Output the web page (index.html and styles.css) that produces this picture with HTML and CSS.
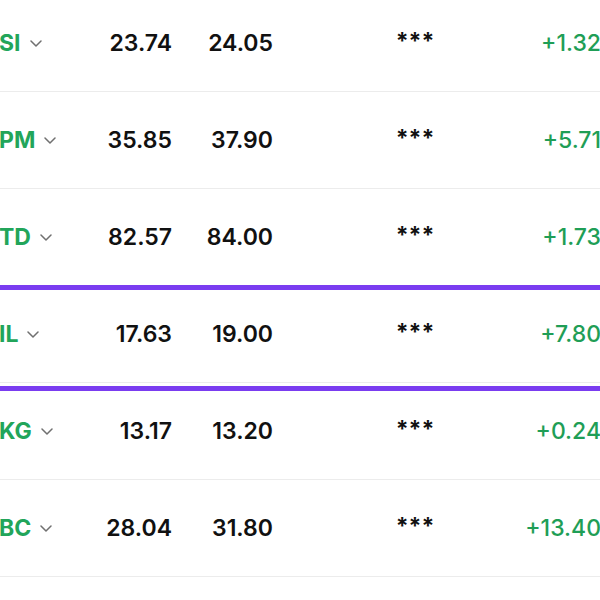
FILE: index.html
```html
<!DOCTYPE html>
<html>
<head>
<meta charset="utf-8">
<link rel="stylesheet" href="styles.css">
</head>
<body>
<div class="list">
  <div class="row">
    <div class="ticker"><span class="sym">SI</span><svg class="chev" viewBox="0 0 12 7"><polyline points="1,1 6,6 11,1"/></svg></div>
    <div class="num bid">23.74</div>
    <div class="num ask">24.05</div>
    <div class="stars">***</div>
    <div class="chg">+1.32</div>
  </div>
  <div class="row">
    <div class="ticker"><span class="sym">PM</span><svg class="chev" viewBox="0 0 12 7"><polyline points="1,1 6,6 11,1"/></svg></div>
    <div class="num bid">35.85</div>
    <div class="num ask">37.90</div>
    <div class="stars">***</div>
    <div class="chg">+5.71</div>
  </div>
  <div class="row">
    <div class="ticker"><span class="sym">TD</span><svg class="chev" viewBox="0 0 12 7"><polyline points="1,1 6,6 11,1"/></svg></div>
    <div class="num bid">82.57</div>
    <div class="num ask">84.00</div>
    <div class="stars">***</div>
    <div class="chg">+1.73</div>
  </div>
  <div class="row selected">
    <div class="highlight"></div>
    <div class="ticker"><span class="sym">IL</span><svg class="chev" viewBox="0 0 12 7"><polyline points="1,1 6,6 11,1"/></svg></div>
    <div class="num bid">17.63</div>
    <div class="num ask">19.00</div>
    <div class="stars">***</div>
    <div class="chg">+7.80</div>
  </div>
  <div class="row">
    <div class="ticker"><span class="sym">KG</span><svg class="chev" viewBox="0 0 12 7"><polyline points="1,1 6,6 11,1"/></svg></div>
    <div class="num bid">13.17</div>
    <div class="num ask">13.20</div>
    <div class="stars">***</div>
    <div class="chg">+0.24</div>
  </div>
  <div class="row">
    <div class="ticker"><span class="sym">BC</span><svg class="chev" viewBox="0 0 12 7"><polyline points="1,1 6,6 11,1"/></svg></div>
    <div class="num bid">28.04</div>
    <div class="num ask">31.80</div>
    <div class="stars">***</div>
    <div class="chg">+13.40</div>
  </div>
</div>
</body>
</html>
```

FILE: styles.css
```css
html, body {
  margin: 0;
  padding: 0;
  background: #ffffff;
  overflow: hidden;
}
body {
  font-family: Inter, "Noto Sans", "Liberation Sans", sans-serif;
  color: #111111;
  width: 600px;
  height: 600px;
}
.list {
  margin-top: -5px;
}
.row {
  position: relative;
  display: grid;
  grid-template-columns: 100px 72px 101px 92px 100px 135px;
  align-items: center;
  height: 96px;
  border-bottom: 1px solid #ececec;
}
.ticker {
  display: flex;
  align-items: center;
  gap: 9px;
  margin-left: -1px;
}
.sym {
  font-weight: 700;
  font-size: 23px;
  color: #22a55a;
}
.chev {
  width: 12px;
  height: 7px;
  fill: none;
  stroke: #707070;
  stroke-width: 1.5;
  stroke-linecap: round;
  stroke-linejoin: round;
}
.num {
  font-size: 23px;
  font-weight: 600;
  text-align: right;
  color: #111111;
}
.stars {
  grid-column: 5;
  text-align: center;
  font-size: 23px;
  font-weight: 700;
  color: #111111;
  margin-top: -4px;
}
.chg {
  grid-column: 6;
  text-align: right;
  font-size: 23px;
  font-weight: 500;
  color: #1f9e56;
  margin-right: -1px;
}
.highlight {
  position: absolute;
  left: -10px;
  right: -10px;
  top: -1px;
  height: 96px;
  border-top: 5px solid #7a3cf0;
  border-bottom: 5px solid #7a3cf0;
  pointer-events: none;
}
```
